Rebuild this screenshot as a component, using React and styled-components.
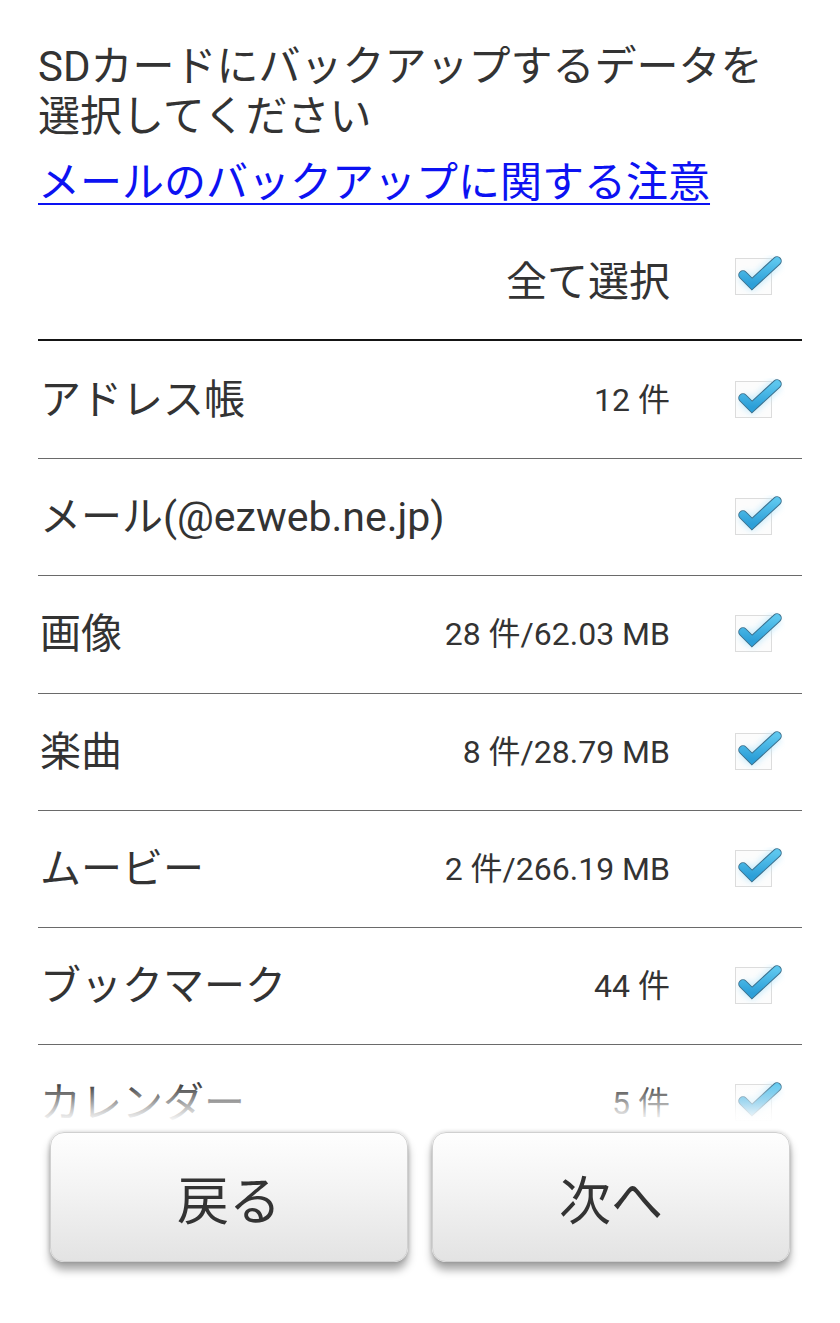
import React from "react"
import styled, { createGlobalStyle } from "styled-components"

const GlobalStyle = createGlobalStyle`
  html, body {
    margin: 0;
    padding: 0;
    background: #fff;
  }
  body {
    font-family: Roboto, "Noto Sans CJK JP", "Noto Sans", sans-serif;
    color: #333;
  }
`

const Page = styled.div`
  width: 840px;
  height: 1323px;
  display: flex;
  flex-direction: column;
  overflow: hidden;
  background: #fff;
`

const ScrollArea = styled.div`
  position: relative;
  flex: 1;
  overflow: hidden;
  padding: 42px 38px 0;
`

const Fade = styled.div`
  position: absolute;
  left: 0;
  right: 0;
  bottom: 0;
  height: 40px;
  background: linear-gradient(rgba(255, 255, 255, 0), rgba(255, 255, 255, 0.75) 70%, #fff);
  pointer-events: none;
`

const Heading = styled.div`
  font-size: 42px;
  line-height: 50px;
  color: #333;
`

const NoticeLink = styled.a`
  display: block;
  margin-top: 16px;
  font-size: 42px;
  line-height: 50px;
  color: #0c12f2;
  text-decoration: underline;
  text-decoration-thickness: 2px;
  text-underline-offset: 6px;
  cursor: pointer;
`

const Row = styled.div`
  display: grid;
  grid-template-columns: 1fr auto 132px;
  align-items: center;
  height: ${(p) => (p.$head ? "82px" : "116.2px")};
  padding: ${(p) => (p.$head ? "49px 0 0" : "0")};
  margin-top: ${(p) => (p.$first ? "1px" : "0")};
  border-bottom: ${(p) => (p.$head ? "2px solid #151515" : "1px solid #6a6a6a")};
`

const Label = styled.div`
  font-size: 41px;
  line-height: 50px;
  color: #333;
  white-space: nowrap;
  padding-left: 2px;
`

const Count = styled.div`
  font-size: 32px;
  line-height: 40px;
  color: #333;
  text-align: right;
  white-space: nowrap;
`

const SelectAllText = styled.div`
  grid-column: 2;
  font-size: 41px;
  line-height: 50px;
  color: #333;
  text-align: right;
  align-self: start;
`

const CheckCell = styled.div`
  grid-column: 3;
  display: flex;
  align-items: center;
  padding-left: 65px;
  align-self: ${(p) => (p.$head ? "start" : "center")};
  margin-top: ${(p) => (p.$head ? "-2px" : "0")};
`

const Footer = styled.div`
  height: 201px;
  flex: none;
  display: grid;
  grid-template-columns: 1fr 1fr;
  column-gap: 24px;
  padding: 10px 50px 0;
  box-sizing: border-box;
  background: #fff;
`

const Button = styled.button`
  height: 130px;
  border: 1px solid #d0d0d0;
  border-radius: 14px;
  background: linear-gradient(#fefefe, #f3f3f3 45%, #e3e3e3);
  box-shadow: 0 8px 9px rgba(0, 0, 0, 0.34), 0 0 4px rgba(0, 0, 0, 0.2);
  font-family: Roboto, "Noto Sans CJK JP", sans-serif;
  font-size: 52px;
  color: #333;
  padding: 0;
  cursor: pointer;
`

function Check() {
  return (
    <svg width="50" height="44" viewBox="0 0 50 44">
      <defs>
        <linearGradient id="ck" x1="0" y1="0" x2="0" y2="1">
          <stop offset="0" stopColor="#5cc6ee" />
          <stop offset="1" stopColor="#2c9fd8" />
        </linearGradient>
        <filter id="glow" x="-50%" y="-50%" width="200%" height="200%">
          <feGaussianBlur stdDeviation="3" />
        </filter>
      </defs>
      <rect x="0.5" y="3.5" width="36" height="36" fill="#fcfcfc" stroke="#dcdcdc" />
      <path
        d="M8 20 L17 29 L42 6"
        fill="none"
        stroke="#bfe9fb"
        strokeWidth="12"
        strokeLinejoin="round"
        filter="url(#glow)"
        opacity="0.9"
      />
      <path
        d="M8 20 L17 29 L42 6"
        fill="none"
        stroke="#3b6f8c"
        strokeWidth="9.5"
        strokeLinecap="round"
        strokeLinejoin="miter"
      />
      <path
        d="M8 20 L17 29 L42 6"
        fill="none"
        stroke="url(#ck)"
        strokeWidth="7.5"
        strokeLinecap="round"
        strokeLinejoin="miter"
      />
    </svg>
  )
}

const items = [
  { label: "アドレス帳", count: "12 件" },
  { label: "メール(@ezweb.ne.jp)", count: "" },
  { label: "画像", count: "28 件/62.03 MB" },
  { label: "楽曲", count: "8 件/28.79 MB" },
  { label: "ムービー", count: "2 件/266.19 MB" },
  { label: "ブックマーク", count: "44 件" },
  { label: "カレンダー", count: "5 件" },
]

export default function App() {
  return (
    <Page>
      <GlobalStyle />
      <ScrollArea>
        <Heading>SDカードにバックアップするデータを選択してください</Heading>
        <NoticeLink>メールのバックアップに関する注意</NoticeLink>
        <Row $head>
          <SelectAllText>全て選択</SelectAllText>
          <CheckCell $head>
            <Check />
          </CheckCell>
        </Row>
        {items.map((it, i) => (
          <Row key={it.label} $first={i === 0}>
            <Label>{it.label}</Label>
            <Count>{it.count}</Count>
            <CheckCell>
              <Check />
            </CheckCell>
          </Row>
        ))}
        <Fade />
      </ScrollArea>
      <Footer>
        <Button>戻る</Button>
        <Button>次へ</Button>
      </Footer>
    </Page>
  )
}
